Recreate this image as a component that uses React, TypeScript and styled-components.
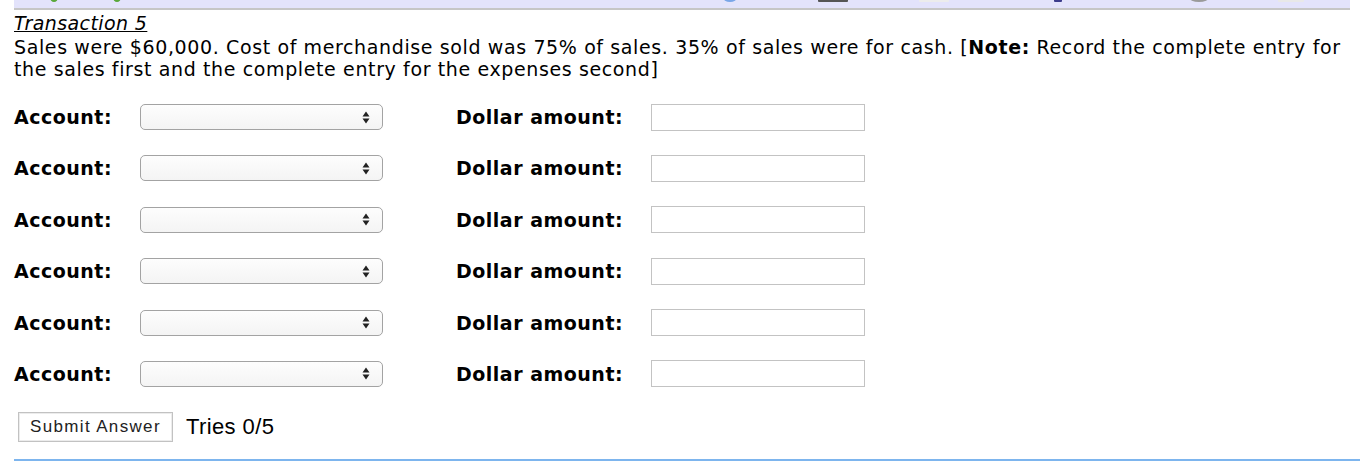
import React from "react";
import styled, { createGlobalStyle } from "styled-components";

const GlobalStyle = createGlobalStyle`
  html, body {
    margin: 0;
    padding: 0;
    background: #ffffff;
  }
  body {
    font-family: "DejaVu Sans", Verdana, sans-serif;
    color: #000;
  }
`;

const Page = styled.div`
  width: 1366px;
  height: 462px;
  overflow: hidden;
  position: relative;
  padding: 0 6px 0 14px;
  box-sizing: border-box;
`;

const Toolbar = styled.div`
  height: 8px;
  width: 1336px;
  background: #e3e3fb;
  border-bottom: 2px solid #c6c6c6;
  position: relative;
  overflow: hidden;
`;

const ToolIcon = styled.span<{ $left: number; $w: number; $color: string; $round?: boolean }>`
  position: absolute;
  left: ${({ $left }) => $left}px;
  top: -7px;
  width: ${({ $w }) => $w}px;
  height: 9px;
  background: ${({ $color }) => $color};
  border-radius: ${({ $round }) => ($round ? "50%" : "1px")};
`;

const Title = styled.div`
  font-size: 19px;
  letter-spacing: 0.4px;
  font-style: italic;
  text-decoration: underline;
  line-height: 22px;
  margin-top: 2px;
`;

const Prompt = styled.p`
  margin: 2px 0 0;
  font-size: 19px;
  letter-spacing: 0.62px;
  line-height: 22px;
  max-width: 1346px;
`;

const Rows = styled.div`
  display: flex;
  flex-direction: column;
  gap: 25.4px;
  margin-top: 24px;
`;

const Row = styled.div`
  display: flex;
  align-items: center;
  height: 26px;
`;

const Label = styled.label<{ $w: number }>`
  font-weight: bold;
  font-size: 19px;
  letter-spacing: 0.5px;
  width: ${({ $w }) => $w}px;
  flex-shrink: 0;
`;

const SelectBox = styled.div`
  width: 243px;
  height: 26px;
  box-sizing: border-box;
  border: 1px solid #a3a3a3;
  border-radius: 5px;
  background: linear-gradient(#fdfdfd, #f4f4f4);
  display: flex;
  align-items: center;
  justify-content: flex-end;
  padding-right: 12px;
  margin-right: 73px;
`;

const Arrows = styled.svg`
  width: 8px;
  height: 13px;
`;

const AmountInput = styled.input`
  width: 214px;
  height: 27px;
  box-sizing: border-box;
  border: 1px solid #c3c3c3;
  padding: 0 4px;
  font-size: 16px;
  outline: none;
`;

const Footer = styled.div`
  display: flex;
  align-items: center;
  gap: 13px;
  margin-top: 25px;
  padding-left: 4px;
`;

const SubmitButton = styled.button`
  height: 30px;
  padding: 0 11px;
  background: #fff;
  border: 1px solid #c2c2c2;
  box-shadow: inset 0 0 0 1px #ececec;
  font-family: "Liberation Sans", Arial, sans-serif;
  font-size: 17px;
  letter-spacing: 1.35px;
  color: #222;
`;

const Tries = styled.span`
  font-family: "Liberation Sans", Arial, sans-serif;
  font-size: 22px;
  letter-spacing: 0.4px;
`;

const Rule = styled.div`
  position: absolute;
  left: 14px;
  bottom: 1px;
  width: 1346px;
  height: 2px;
  background: #7db5ee;
`;

const icons = [
  { left: 36, w: 8, color: "#5aa83a", round: true },
  { left: 99, w: 8, color: "#5aa83a", round: true },
  { left: 709, w: 14, color: "#7aa6e8", round: true },
  { left: 804, w: 30, color: "#555" },
  { left: 905, w: 30, color: "#ececec" },
  { left: 1040, w: 8, color: "#3c3c8c" },
  { left: 1175, w: 20, color: "#9a9a9a", round: true },
  { left: 1264, w: 26, color: "#e8e8e8" },
];

export default function App() {
  return (
    <>
      <GlobalStyle />
      <Page>
        <Toolbar>
          {icons.map((i) => (
            <ToolIcon key={i.left} $left={i.left} $w={i.w} $color={i.color} $round={i.round} />
          ))}
        </Toolbar>
        <Title>Transaction 5</Title>
        <Prompt>
          Sales were $60,000. Cost of merchandise sold was 75% of sales. 35% of sales were for cash. [
          <b>Note:</b> Record the complete entry for the sales first and the complete entry for the expenses second]
        </Prompt>
        <Rows>
          {[0, 1, 2, 3, 4, 5].map((n) => (
            <Row key={n}>
              <Label $w={126}>Account:</Label>
              <SelectBox>
                <Arrows viewBox="0 0 8 13">
                  <path d="M4 0.5 L7.5 5.5 L0.5 5.5 Z M4 12.5 L7.5 7.5 L0.5 7.5 Z" fill="#222" />
                </Arrows>
              </SelectBox>
              <Label $w={195}>Dollar amount:</Label>
              <AmountInput type="text" />
            </Row>
          ))}
        </Rows>
        <Footer>
          <SubmitButton>Submit Answer</SubmitButton>
          <Tries>Tries 0/5</Tries>
        </Footer>
        <Rule />
      </Page>
    </>
  );
}
